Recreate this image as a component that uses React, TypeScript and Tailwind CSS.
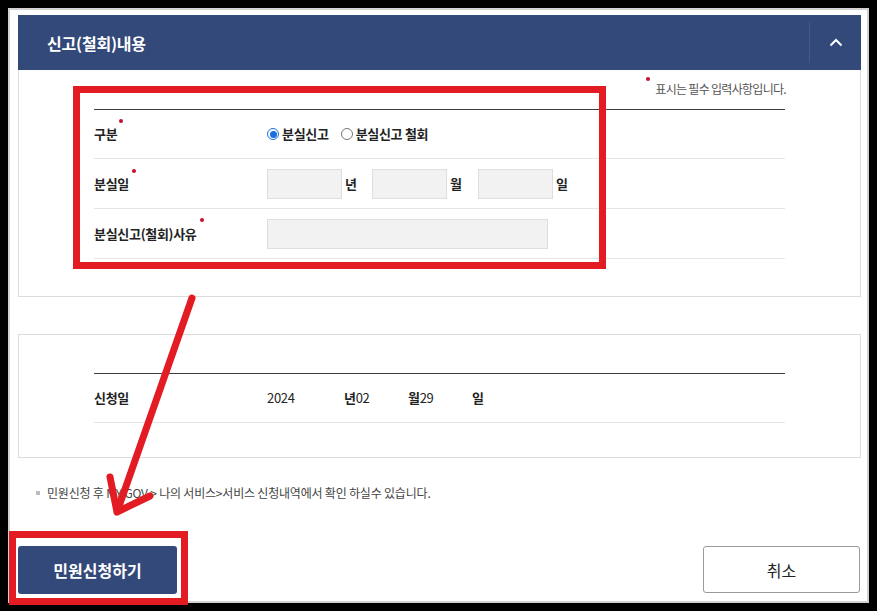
import React from 'react';

const FONT = { fontFamily: '"Noto Sans CJK KR", "Noto Sans", sans-serif' };

const RequiredDot: React.FC<{ className: string }> = ({ className }) => (
  <span className={`absolute w-[4px] h-[4px] rounded-full bg-[#c8102e] ${className}`} />
);

const Radio: React.FC<{ checked?: boolean; label: string }> = ({ checked, label }) => (
  <label className="flex items-center gap-[3px]">
    {checked ? (
      <span className="w-[12px] h-[12px] rounded-full border border-[#1a6fe0] flex items-center justify-center">
        <span className="w-[7px] h-[7px] rounded-full bg-[#1a6fe0]" />
      </span>
    ) : (
      <span className="w-[12px] h-[12px] rounded-full border border-[#767676]" />
    )}
    <span className="font-bold text-[#222]">{label}</span>
  </label>
);

const DateBox: React.FC = () => (
  <div className="w-[75px] h-[30px] bg-[#f2f2f2] border border-[#dedede]" />
);

const App: React.FC = () => {
  return (
    <div className="relative w-[877px] h-[611px] bg-black overflow-hidden pt-[8px] pl-[8px]" style={FONT}>
      {/* 페이지 */}
      <div className="w-[861px] h-[595px] bg-white border-2 border-[#d2d2d2] pt-[5px] pl-[8px] pr-[6px]">
        {/* 신고(철회)내용 헤더 */}
        <div className="h-[55px] bg-[#33497a] flex items-center">
          <h2 className="pl-[29px] text-white text-[16px] font-bold tracking-[-0.2px] flex-1">신고(철회)내용</h2>
          <div className="w-[52px] h-[41px] border-l border-[#45598a] flex items-center justify-center">
            <svg width="14" height="9" viewBox="0 0 14 9" fill="none">
              <path d="M1.5 7.5L7 2l5.5 5.5" stroke="white" strokeWidth="2" />
            </svg>
          </div>
        </div>

        {/* 입력 영역 */}
        <div className="h-[227px] border-x border-b border-[#dcdcdc] px-[75px]">
          <div className="h-[39px] pt-[11px] flex justify-end">
            <p className="relative text-[12px] leading-[16px] text-[#555] tracking-[-0.7px] mr-[-1px]">
              <RequiredDot className="left-[-9px] top-[-4px]" />
              표시는 필수 입력사항입니다.
            </p>
          </div>
          <div className="border-t border-[#3d3d3d] text-[13px] tracking-[-0.3px] text-[#222]">
            <div className="h-[49px] flex items-center border-b border-[#e6e6e6]">
              <div className="w-[173px] font-bold">
                <span className="relative">
                  구분
                  <RequiredDot className="right-[-6px] top-[-5px]" />
                </span>
              </div>
              <div className="flex items-center gap-[12px]">
                <Radio checked label="분실신고" />
                <Radio label="분실신고 철회" />
              </div>
            </div>
            <div className="h-[50px] flex items-center border-b border-[#e6e6e6]">
              <div className="w-[173px] font-bold">
                <span className="relative">
                  분실일
                  <RequiredDot className="right-[-7px] top-[-5px]" />
                </span>
              </div>
              <div className="flex items-center font-bold">
                <DateBox />
                <span className="w-[30px] pl-[3px]">년</span>
                <DateBox />
                <span className="w-[31px] pl-[3px]">월</span>
                <DateBox />
                <span className="pl-[3px]">일</span>
              </div>
            </div>
            <div className="h-[50px] flex items-center border-b border-[#e6e6e6]">
              <div className="w-[173px] font-bold">
                <span className="relative">
                  분실신고(철회)사유
                  <RequiredDot className="right-[-7px] top-[-6px]" />
                </span>
              </div>
              <div className="w-[281px] h-[30px] bg-[#f2f2f2] border border-[#dedede]" />
            </div>
          </div>
        </div>

        {/* 신청일 */}
        <div className="mt-[37px] h-[124px] border border-[#dcdcdc] px-[75px] pt-[38px]">
          <div className="border-t border-[#3d3d3d] text-[13px] tracking-[-0.3px] text-[#222]">
            <div className="h-[49px] flex items-center border-b border-[#e6e6e6]">
              <div className="w-[173px] font-bold">신청일</div>
              <div className="flex items-center">
                <span className="w-[77px]">2024</span>
                <span className="w-[64px]"><b>년</b>02</span>
                <span className="w-[64px]"><b>월</b>29</span>
                <span className="font-bold">일</span>
              </div>
            </div>
          </div>
        </div>

        {/* 안내 */}
        <p className="mt-[27px] pl-[18px] text-[12px] leading-[16px] text-[#444] tracking-[-0.2px] flex items-center">
          <span className="w-[4px] h-[4px] bg-[#bdbdbd] mr-[7px]" />
          민원신청 후 MY GOV &gt; 나의 서비스&gt;서비스 신청내역에서 확인 하실수 있습니다.
        </p>

        {/* 버튼 */}
        <div className="mt-[45px] flex justify-between items-start">
          <button className="w-[159px] h-[48px] rounded-[3px] bg-[#33497a] text-white text-[16px] font-bold">
            민원신청하기
          </button>
          <button className="w-[157px] h-[47px] mr-[1px] rounded-[3px] bg-white border border-[#9a9a9a] text-[#222] text-[16px]">
            취소
          </button>
        </div>
      </div>

      {/* 주석 표시 (빨간 박스, 화살표) */}
      <div className="absolute left-[73px] top-[86px] w-[533px] h-[183px] border-[7px] border-[#e31b23] pointer-events-none" />
      <div className="absolute left-[9px] top-[531px] w-[179px] h-[74px] border-[7px] border-[#e31b23] pointer-events-none" />
      <svg className="absolute left-0 top-0 pointer-events-none" width="877" height="611" viewBox="0 0 877 611" fill="none">
        <path d="M192 298L117 512M117 512L110 477M117 512L150 496" stroke="#e31b23" strokeWidth="7" strokeLinecap="round" strokeLinejoin="round" />
      </svg>
    </div>
  );
};

export default App;
